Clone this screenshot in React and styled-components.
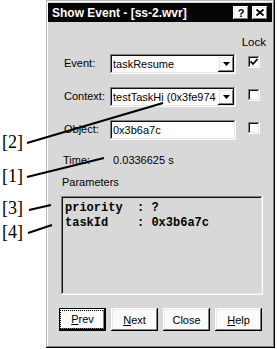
import styled, { createGlobalStyle, css } from "styled-components";

const GlobalStyle = createGlobalStyle`
    html, body {
        margin : 0;
        padding : 0;
        background : #ffffff;
    }
    body {
        font-family : "Liberation Sans", Arial, sans-serif;
        font-size : 11px;
        color : #000000;
    }
`;

const FACE = "#d8d8d8";

const raised = css`
    background : #fbfbfb;
    box-shadow : inset -1px -1px #000000, inset 1px 1px #ffffff,
        inset -2px -2px #808080, inset 2px 2px #e8e8e8;
`;

const sunken = css`
    box-shadow : inset -1px -1px #ffffff, inset 1px 1px #808080,
        inset -2px -2px #e4e4e4, inset 2px 2px #101010;
`;

const StyledPage = styled.div`
    position : relative;
    width : 277px;
    height : 349px;
    display : flex;
    overflow : hidden;
`;

const StyledCallouts = styled.div`
    position : relative;
    width : 46px;
    flex : none;
`;

const StyledCallout = styled.span`
    position : absolute;
    left : 2px;
    font-family : "Liberation Serif", "Times New Roman", serif;
    font-size : 18px;
    line-height : 18px;
`;

const StyledLeaders = styled.svg`
    position : absolute;
    left : 0;
    top : 0;
    pointer-events : none;
`;

const StyledWindow = styled.div`
    width : 229px;
    height : 348px;
    box-sizing : border-box;
    padding : 3px 3px 3px 2px;
    background : ${FACE};
    box-shadow : inset -1px -1px #000000, inset 1px 1px #b8b8b8,
        inset -2px -2px #808080, inset 2px 2px #ffffff;
    display : flex;
    flex-direction : column;
`;

const StyledTitleBar = styled.div`
    height : 19px;
    background : #050505;
    color : #ffffff;
    font-weight : bold;
    font-size : 12px;
    display : flex;
    align-items : center;
    padding : 0 4px 0 4px;
    gap : 3px;
`;

const StyledTitleText = styled.span`
    flex : 1;
    white-space : nowrap;
`;

const StyledTitleButton = styled.div`
    ${raised};
    width : 16px;
    height : 14px;
    display : flex;
    align-items : center;
    justify-content : center;
    color : #000000;
    font-size : 11px;
    font-weight : bold;
`;

const StyledBody = styled.div`
    flex : 1;
    display : flex;
    flex-direction : column;
    padding : 14px 6px 0 13px;
`;

const StyledLockHeader = styled.div`
    text-align : right;
    line-height : 13px;
    font-size : 11.5px;
`;

const StyledForm = styled.div`
    display : grid;
    grid-template-columns : 46px 126px 24px;
    grid-auto-rows : 20px;
    row-gap : 13px;
    margin : 5px 0 0 3px;
`;

const StyledLabel = styled.div`
    display : flex;
    align-items : center;
    margin-top : -2px;
    white-space : nowrap;
`;

const StyledField = styled.div`
    ${sunken};
    background : #ffffff;
    display : flex;
    align-items : center;
    padding : 2px 2px 2px 3px;
    box-sizing : border-box;
    overflow : hidden;
    white-space : nowrap;
`;

const StyledFieldText = styled.span`
    flex : 1;
    overflow : hidden;
`;

const StyledDropButton = styled.div`
    ${raised};
    width : 16px;
    height : 16px;
    flex : none;
    display : flex;
    align-items : center;
    justify-content : center;
`;

const StyledCheck = styled.div`
    ${sunken};
    background : #ffffff;
    width : 12px;
    height : 12px;
    margin-top : 2px;
    justify-self : end;
    display : flex;
    align-items : center;
    justify-content : center;
`;

const StyledInfo = styled.div`
    line-height : 13px;
    margin-top : ${(p) => p.$gap}px;
    padding-left : ${(p) => p.$indent}px;
    display : flex;
    gap : 23px;
`;

const StyledParams = styled.div`
    ${sunken};
    height : 99px;
    margin-top : 7px;
    width : 202px;
    box-sizing : border-box;
    padding : 5px 4px;
    font-family : "Liberation Mono", "Courier New", monospace;
    font-weight : bold;
    font-size : 12px;
    line-height : 15px;
    white-space : pre;
`;

const StyledButtonRow = styled.div`
    display : flex;
    gap : 5px;
    margin-top : 13px;
    margin-left : -2px;
`;

const StyledButton = styled.div`
    ${raised};
    width : 47px;
    height : 23px;
    box-sizing : border-box;
    display : flex;
    align-items : center;
    justify-content : center;
    ${(p) => p.$default && css`
        box-shadow : inset 0 0 0 1px #000000, inset -2px -2px #000000,
            inset 2px 2px #ffffff, inset -3px -3px #808080;
    `}
`;

const StyledFocus = styled.span`
    border : 1px dotted #000000;
    padding : 2px 10px;
    line-height : 13px;
`;

const Arrow = () => (
    <svg width="7" height="4" viewBox="0 0 7 4">
        <path d="M0 0H7L3.5 4Z" fill="#000" />
    </svg>
);

const Tick = () => (
    <svg width="8" height="8" viewBox="0 0 8 8">
        <path d="M0.5 3.5L3 6L7.5 1" fill="none" stroke="#000" strokeWidth="1.8" />
    </svg>
);

const rows = [
    { label : "Event:", value : "taskResume", combo : true, locked : true },
    { label : "Context:", value : "testTaskHi (0x3fe974", combo : true, locked : false },
    { label : "Object:", value : "0x3b6a7c", combo : false, locked : false },
];

const callouts = [
    { text : "[2]", top : 133, line : [27, 143, 163, 103] },
    { text : "[1]", top : 167, line : [27, 177, 104, 158] },
    { text : "[3]", top : 199, line : [29, 210, 51, 205] },
    { text : "[4]", top : 223, line : [28, 233, 52, 225] },
];

const App = () => {
    return (
        <>
            <GlobalStyle />
            <StyledPage>
                <StyledCallouts>
                    {callouts.map((c) => (
                        <StyledCallout key={c.text} style={{ top : c.top }}>{c.text}</StyledCallout>
                    ))}
                </StyledCallouts>
                <StyledWindow>
                    <StyledTitleBar>
                        <StyledTitleText>Show Event - [ss-2.wvr]</StyledTitleText>
                        <StyledTitleButton>?</StyledTitleButton>
                        <StyledTitleButton>
                            <svg width="8" height="7" viewBox="0 0 8 7">
                                <path d="M0.5 0.5L7.5 6.5M7.5 0.5L0.5 6.5" stroke="#000" strokeWidth="1.8" />
                            </svg>
                        </StyledTitleButton>
                    </StyledTitleBar>
                    <StyledBody>
                        <StyledLockHeader>Lock</StyledLockHeader>
                        <StyledForm>
                            {rows.map((r) => [
                                <StyledLabel key={r.label + "l"}>{r.label}</StyledLabel>,
                                <StyledField key={r.label + "f"}>
                                    <StyledFieldText>{r.value}</StyledFieldText>
                                    {r.combo && <StyledDropButton><Arrow /></StyledDropButton>}
                                </StyledField>,
                                <StyledCheck key={r.label + "c"}>{r.locked && <Tick />}</StyledCheck>,
                            ])}
                        </StyledForm>
                        <StyledInfo $gap={14} $indent={2}>
                            <span>Time:</span>
                            <span>0.0336625 s</span>
                        </StyledInfo>
                        <StyledInfo $gap={9} $indent={1}>
                            <span>Parameters</span>
                        </StyledInfo>
                        <StyledParams>{"priority  : ?\ntaskId    : 0x3b6a7c"}</StyledParams>
                        <StyledButtonRow>
                            <StyledButton $default>
                                <StyledFocus><u>P</u>rev</StyledFocus>
                            </StyledButton>
                            <StyledButton><span><u>N</u>ext</span></StyledButton>
                            <StyledButton>Close</StyledButton>
                            <StyledButton><span><u>H</u>elp</span></StyledButton>
                        </StyledButtonRow>
                    </StyledBody>
                </StyledWindow>
                <StyledLeaders width="277" height="349">
                    {callouts.map((c) => (
                        <line key={c.text} x1={c.line[0]} y1={c.line[1]} x2={c.line[2]} y2={c.line[3]}
                            stroke="#000" strokeWidth="2" />
                    ))}
                </StyledLeaders>
            </StyledPage>
        </>
    );
};

export default App;
